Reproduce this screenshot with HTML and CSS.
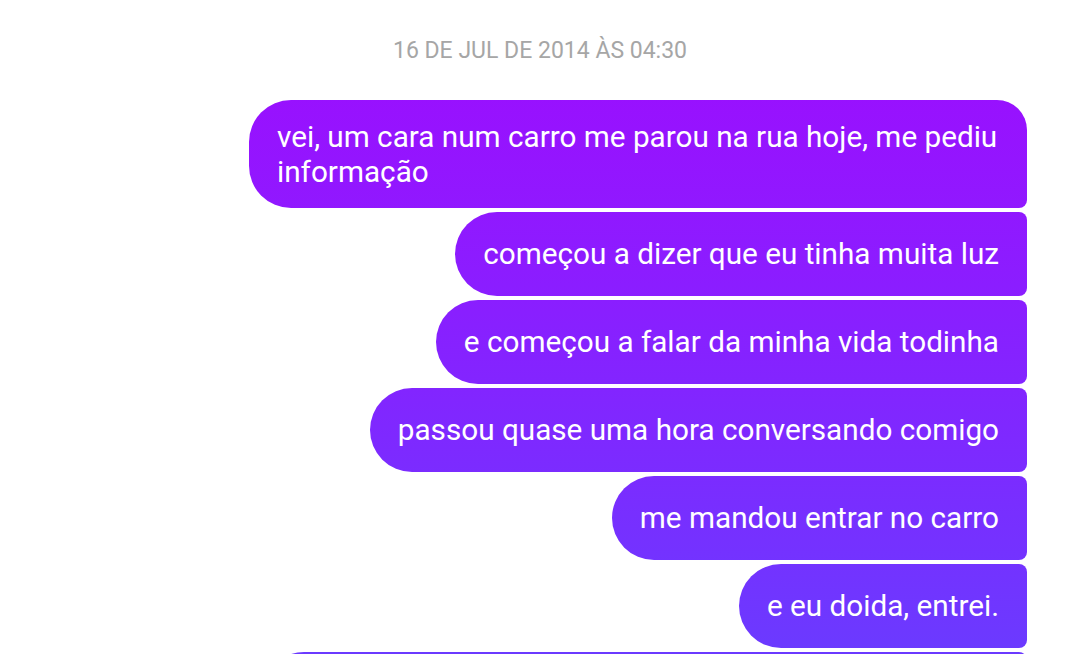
FILE: index.html
```html
<!DOCTYPE html>
<html lang="pt">
<head>
    <meta charset="UTF-8">
    <meta name="viewport" content="width=device-width, initial-scale=1.0">
    <title>Conversa</title>
    <link rel="stylesheet" href="styles.css">
</head>
<body>

<div class="chat">
    <div class="timestamp">16 de jul de 2014 às 04:30</div>

    <div class="thread">
        <div class="bubble first">vei, um cara num carro me parou na rua hoje, me pediu<br>informação</div>
        <div class="bubble">começou a dizer que eu tinha muita luz</div>
        <div class="bubble">e começou a falar da minha vida todinha</div>
        <div class="bubble">passou quase uma hora conversando comigo</div>
        <div class="bubble">me mandou entrar no carro</div>
        <div class="bubble">e eu doida, entrei.</div>
        <div class="bubble next"></div>
    </div>
</div>

</body>
</html>
```

FILE: styles.css
```css
html, body {
    margin: 0;
    padding: 0;
    background: #ffffff;
    overflow: hidden;
}
body {
    font-family: Roboto, "Liberation Sans", sans-serif;
}
.chat {
    width: 1080px;
    height: 654px;
    overflow: hidden;
}
.timestamp {
    text-align: center;
    color: #a6a6a6;
    font-size: 23px;
    text-transform: uppercase;
    padding-top: 37px;
    height: 100px;
    box-sizing: border-box;
}
.thread {
    display: flex;
    flex-direction: column;
    align-items: flex-end;
    gap: 4px;
    padding: 0 53px 0 240px;
}
.bubble {
    box-sizing: border-box;
    min-height: 84px;
    padding: 24px 28px 25px 28px;
    font-size: 29.7px;
    line-height: 35px;
    color: #ffffff;
    white-space: nowrap;
    border-radius: 42px 8px 8px 42px;
    background: linear-gradient(180deg, #9f0bfe 0px, #8a1eff 300px, #6b3aff 654px);
    background-attachment: fixed;
}
.bubble.first {
    width: 778px;
    border-radius: 42px 30px 8px 42px;
    padding-top: 19px;
    padding-bottom: 19px;
}
.bubble.next {
    width: 765px;
}
```
